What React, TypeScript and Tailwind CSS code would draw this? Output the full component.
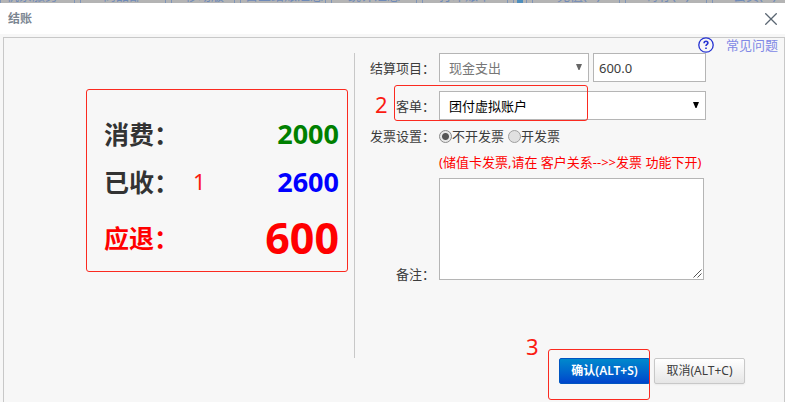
import { type ReactNode } from "react";

const toolbar = [
  { text: "机票服务", cell: "w-[75px] pl-[5px]" },
  { text: "商品部", cell: "w-[86px] pl-[22px]" },
  { text: "移动版", cell: "w-[64px] pl-[13px]" },
  { text: "营业结账汇总", cell: "w-[86px] pl-1" },
  { text: "统计汇总", cell: "w-[86px] pl-4" },
  { text: "打印账单", cell: "w-[86px] pl-4" },
];

const shortcuts = [
  { text: "充值(U)", cell: "w-[88px] pl-6" },
  { text: "寄存(U)", cell: "w-[82px] pl-5" },
  { text: "会员(U)", cell: "w-[80px] pl-5" },
];

function ToolbarItem({ text, cell }: { text: string; cell: string }) {
  return (
    <span className={`mr-[5px] shrink-0 border-x border-[#7f95b8] whitespace-nowrap ${cell}`}>
      {text}
    </span>
  );
}

function Mark({ children, className }: { children: ReactNode; className: string }) {
  return (
    <span className={`pointer-events-none absolute text-[22px] leading-6 text-[#fb1b12] ${className}`}>
      {children}
    </span>
  );
}

function Frame({ className }: { className: string }) {
  return <span className={`pointer-events-none absolute rounded-[3px] border border-[#fb2a20] ${className}`} />;
}

function Arrow({ className }: { className: string }) {
  return (
    <svg viewBox="0 0 6 6" className={`pointer-events-none absolute top-[11px] right-[7px] h-[6px] w-[6px] ${className}`} aria-hidden="true">
      <path d="M0 0h6L3.5 6h-1z" fill="currentColor" />
    </svg>
  );
}

const radio =
  "h-[13px] w-[13px] shrink-0 appearance-none rounded-full border border-[#a0a0a0] bg-[#e0e0e0] checked:border-[#8c8c8c] checked:bg-[radial-gradient(circle,#555_0_3px,#e8e8e8_4px)]";

const row = "grid grid-cols-[80px_1fr] gap-x-1";
const field = "h-[29px] rounded-none border border-[#b5b5b5] bg-white outline-none";

export default function App() {
  return (
    <div className="flex min-h-screen flex-col overflow-hidden bg-[#f7f7f7] font-['Noto_Sans','Noto_Sans_CJK_SC',sans-serif] text-[13px] leading-5 text-[#3c3c3c]">
      <div className="flex h-[3px] items-end overflow-hidden bg-[#b4b4b4] text-[13px] leading-4 text-[#6f8ab8]" aria-hidden="true">
        {toolbar.map((item) => (
          <ToolbarItem key={item.text} {...item} />
        ))}
        <span className="mr-[5px] h-[3px] w-[14px] shrink-0 border-x border-[#7f95b8] px-[3px]">
          <span className="block h-[3px] bg-[#4f8fbd]" />
        </span>
        {shortcuts.map((item) => (
          <ToolbarItem key={item.text} {...item} />
        ))}
      </div>

      <header className="flex h-[31px] items-center justify-between bg-white pr-2 pl-2">
        <h1 className="text-xs font-bold text-[#7a8591]">结账</h1>
        <button type="button" aria-label="关闭" className="text-[#5a6672]">
          <svg viewBox="0 0 12 12" className="h-3 w-3" fill="none" stroke="currentColor" strokeWidth="1.3">
            <path d="M0.3 0.3l11.4 11.4M11.7 0.3L0.3 11.7" />
          </svg>
        </button>
      </header>

      <main className="relative mt-[3px] ml-[3px] flex flex-1 items-start border border-b-0 border-[#c8c8c8] pt-[15px]">
        <a href="#help" className="absolute top-[-3px] right-[6px] flex items-center gap-3 text-[#8088e6]">
          <svg viewBox="0 0 16 16" className="h-4 w-4" fill="none" stroke="#2633d2" strokeWidth="1.3">
            <circle cx="8" cy="8" r="7.2" />
            <path d="M6.1 6.2c0-1.2.8-1.9 1.9-1.9s1.9.7 1.9 1.7c0 1.4-1.9 1.5-1.9 3.1M8 10.6v1.5" strokeWidth="1.6" />
          </svg>
          常见问题
        </a>

        <section className="h-[305px] w-[45%] shrink-0 border-r border-[#c8c8c8] pt-9 pr-[6px] pl-[82px]">
          <dl className="relative h-[183px] rounded-[3px] border border-[#fb2a20] pt-5 pr-2 pl-[17px] text-[25px] font-bold text-[#333]">
            <div className="flex h-12 items-center justify-between">
              <dt>消费：</dt>
              <dd className="text-[27px] text-[#008000]">2000</dd>
            </div>
            <div className="flex h-12 items-center justify-between">
              <dt>已收：</dt>
              <dd className="text-[27px] text-[#0000ff]">2600</dd>
            </div>
            <div className="flex h-16 items-center justify-between text-[#ff0000]">
              <dt>应退：</dt>
              <dd className="text-[43px]">600</dd>
            </div>
            <Mark className="top-[79px] left-[106px] font-normal">1</Mark>
          </dl>
        </section>

        <form className="min-w-0 flex-1" onSubmit={(e) => e.preventDefault()}>
          <div className={row}>
            <label htmlFor="project" className="self-center text-right">
              结算项目：
            </label>
            <div className="flex gap-1">
              <div className="relative w-[150px]">
                <select id="project" className={`${field} w-full appearance-none pl-[9px] text-[#777]`}>
                  <option>现金支出</option>
                </select>
                <Arrow className="text-[#666]" />
              </div>
              <input aria-label="金额" defaultValue="600.0" className={`${field} w-[113px] px-[5px]`} />
            </div>
          </div>

          <div className={`${row} relative mt-[9px]`}>
            <label htmlFor="account" className="self-center text-right">
              客单：
            </label>
            <div className="relative w-[267px]">
              <select id="account" className={`${field} w-full appearance-none pl-[9px] text-black`}>
                <option>团付虚拟账户</option>
              </select>
              <Arrow className="text-black" />
            </div>
            <Mark className="top-[1px] left-5">2</Mark>
            <Frame className="top-[-6px] left-[39px] h-9 w-[194px]" />
          </div>

          <div className={`${row} mt-[6px]`} role="radiogroup" aria-labelledby="invoice">
            <span id="invoice" className="text-right">
              发票设置：
            </span>
            <div className="flex items-center gap-1">
              <label className="flex items-center">
                <input type="radio" name="invoice" defaultChecked className={radio} />
                不开发票
              </label>
              <label className="flex items-center">
                <input type="radio" name="invoice" className={radio} />
                开发票
              </label>
            </div>
          </div>

          <p className="mt-[6px] pl-[84px] whitespace-nowrap text-[#ff0000]">
            (储值卡发票,请在 客户关系--&gt;&gt;发票 功能下开)
          </p>

          <div className={`${row} mt-[6px]`}>
            <label htmlFor="remark" className="self-end -mb-1 text-right">
              备注：
            </label>
            <div className="relative h-[102px] w-[265px]">
              <textarea
                id="remark"
                className="block h-full w-full resize-none border border-[#b5b5b5] bg-white p-1 outline-none"
              />
              <svg viewBox="0 0 9 9" className="pointer-events-none absolute right-[2px] bottom-[2px] h-[9px] w-[9px]" stroke="#555" aria-hidden="true">
                <path d="M0.5 8.5l8-8M4.5 8.5l4-4" />
              </svg>
            </div>
          </div>

          <div className="relative mt-[78px] mr-[39px] flex justify-end gap-1 text-xs">
            <div className="relative">
              <button
                type="submit"
                className="h-[26px] w-[91px] rounded-[2px] border border-[#0055c0] bg-linear-to-b from-[#0088cc] to-[#0044cc] font-semibold text-white"
              >
                确认(ALT+S)
              </button>
              <Mark className="top-[-24px] left-[-33px]">3</Mark>
              <Frame className="top-[-9px] left-[-11px] h-[51px] w-[102px]" />
            </div>
            <button
              type="button"
              className="h-[26px] w-[91px] rounded-[2px] border border-[#c8c8c8] bg-linear-to-b from-white to-[#e6e6e6] shadow-xs"
            >
              取消(ALT+C)
            </button>
          </div>
        </form>
      </main>
    </div>
  );
}
